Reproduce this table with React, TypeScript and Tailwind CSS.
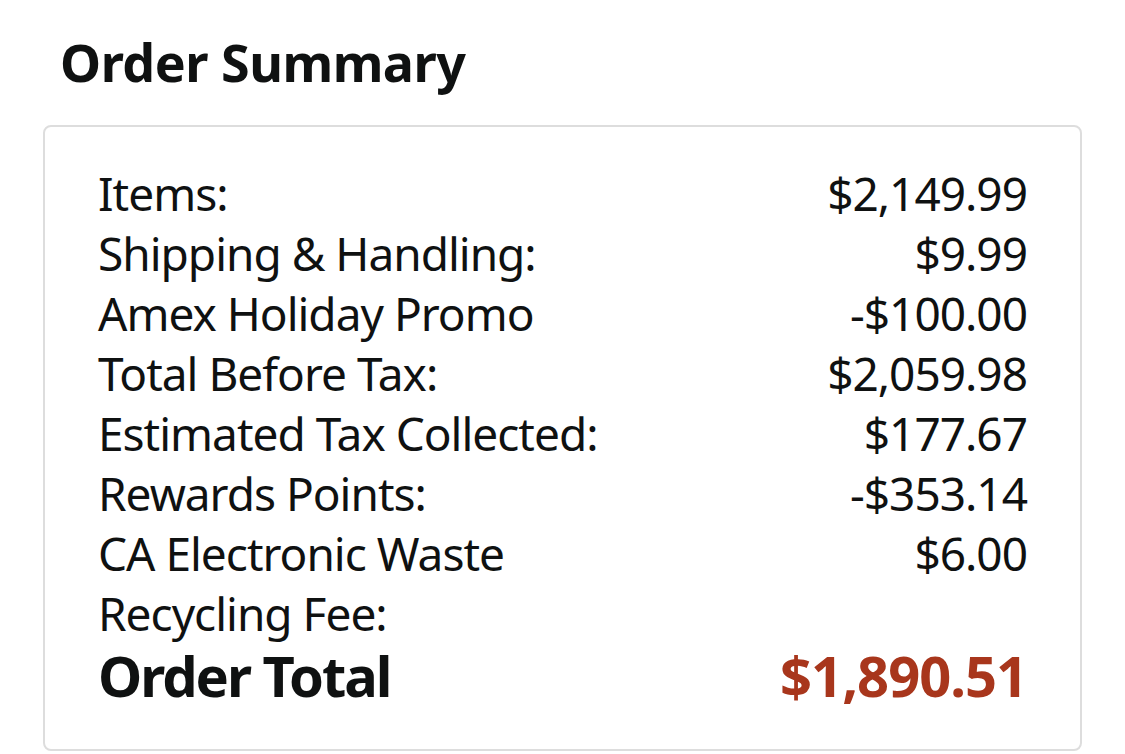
const rows: { label: string; value: string }[] = [
  { label: 'Items:', value: '$2,149.99' },
  { label: 'Shipping & Handling:', value: '$9.99' },
  { label: 'Amex Holiday Promo', value: '-$100.00' },
  { label: 'Total Before Tax:', value: '$2,059.98' },
  { label: 'Estimated Tax Collected:', value: '$177.67' },
  { label: 'Rewards Points:', value: '-$353.14' },
  { label: 'CA Electronic Waste Recycling Fee:', value: '$6.00' },
];

const App = () => {
  return (
    <div
      className="min-h-screen bg-white text-[#0f1111]"
      style={{ fontFamily: '"Noto Sans", "Open Sans", sans-serif' }}
    >
      <div className="pt-[30px] pl-[43px] pr-[43px]">
        <h1 className="ml-[17px] text-[52px] leading-[64px] font-bold tracking-[-0.5px]">Order Summary</h1>

        <div className="mt-[31px] border-2 border-[#dddddd] rounded-[8px] pt-[36px] pb-[42px] pl-[53px] pr-[53px]">
          <div className="grid grid-cols-[minmax(0,520px)_1fr] text-[46px] leading-[60px] tracking-[-1px]">
            {rows.map((r) => (
              <div key={r.label} className="contents">
                <div>{r.label}</div>
                <div className="text-right">{r.value}</div>
              </div>
            ))}
            <div className="text-[56px] leading-[64px] font-bold tracking-[-2px]">Order Total</div>
            <div className="text-right text-[56px] leading-[64px] font-bold tracking-[-1px] text-[#a8361c]">$1,890.51</div>
          </div>
        </div>
      </div>
    </div>
  );
};

export default App;
